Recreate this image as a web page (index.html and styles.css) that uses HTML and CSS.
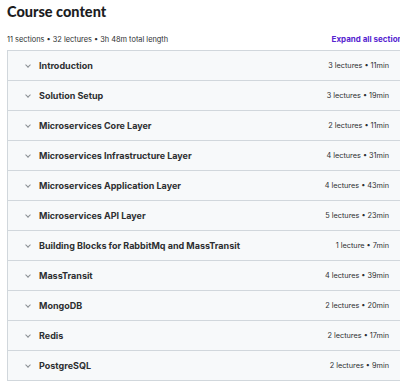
FILE: index.html
```html
<!DOCTYPE html>
<html>

<head>
  <meta charset="utf-8">
  <meta name="viewport" content="width=device-width">
  <title>Course content</title>
  <link rel="stylesheet" href="styles.css">
</head>

<body>
  <div class="course">
    <h2>Course content</h2>
    <div class="summary">
      <span>11 sections • 32 lectures • 3h 48m total length</span>
      <span class="expand">Expand all sections</span>
    </div>
    <div class="sections">
      <div class="section"><span class="chev"></span><span class="name">Introduction</span><span class="meta">3 lectures • 11min</span></div>
      <div class="section"><span class="chev"></span><span class="name">Solution Setup</span><span class="meta">3 lectures • 19min</span></div>
      <div class="section"><span class="chev"></span><span class="name">Microservices Core Layer</span><span class="meta">2 lectures • 11min</span></div>
      <div class="section"><span class="chev"></span><span class="name">Microservices Infrastructure Layer</span><span class="meta">4 lectures • 31min</span></div>
      <div class="section"><span class="chev"></span><span class="name">Microservices Application Layer</span><span class="meta">4 lectures • 43min</span></div>
      <div class="section"><span class="chev"></span><span class="name">Microservices API Layer</span><span class="meta">5 lectures • 23min</span></div>
      <div class="section"><span class="chev"></span><span class="name">Building Blocks for RabbitMq and MassTransit</span><span class="meta">1 lecture • 7min</span></div>
      <div class="section"><span class="chev"></span><span class="name">MassTransit</span><span class="meta">4 lectures • 39min</span></div>
      <div class="section"><span class="chev"></span><span class="name">MongoDB</span><span class="meta">2 lectures • 20min</span></div>
      <div class="section"><span class="chev"></span><span class="name">Redis</span><span class="meta">2 lectures • 17min</span></div>
      <div class="section"><span class="chev"></span><span class="name">PostgreSQL</span><span class="meta">2 lectures • 9min</span></div>
    </div>
  </div>
</body>

</html>
```

FILE: styles.css
```css
html {
  height: 100%;
  width: 100%;
}

body {
  margin: 0;
  overflow: hidden;
  background-color: #ffffff;
  color: #2d2f31;
  font-family: Inter, "Noto Sans", sans-serif;
}

.course {
  width: 400px;
  margin-left: 7px;
}

h2 {
  margin: 0;
  padding-top: 1px;
  font-family: Lato, Inter, sans-serif;
  font-size: 14.5px;
  font-weight: 900;
  line-height: 22px;
  color: #1c1d1f;
}

.summary {
  display: flex;
  justify-content: space-between;
  align-items: center;
  margin-top: 5px;
  height: 22px;
  font-size: 7.4px;
  color: #2d2f31;
}

.expand {
  font-weight: 700;
  color: #5624d0;
  font-size: 8px;
}

.sections {
  border: 1px solid #d1d7dc;
  border-bottom: none;
}

.section {
  display: flex;
  align-items: center;
  height: 29px;
  padding: 0 17px 0 18px;
  background-color: #f7f9fa;
  border-bottom: 1px solid #d1d7dc;
}

.chev {
  width: 3px;
  height: 3px;
  border-right: 1px solid #8a8f93;
  border-bottom: 1px solid #8a8f93;
  transform: rotate(45deg);
  margin: 0 9px 2px 0;
}

.name {
  flex: 1;
  font-size: 9px;
  font-weight: 700;
  color: #2d2f31;
}

.meta {
  font-size: 7.3px;
  color: #2d2f31;
}
```
